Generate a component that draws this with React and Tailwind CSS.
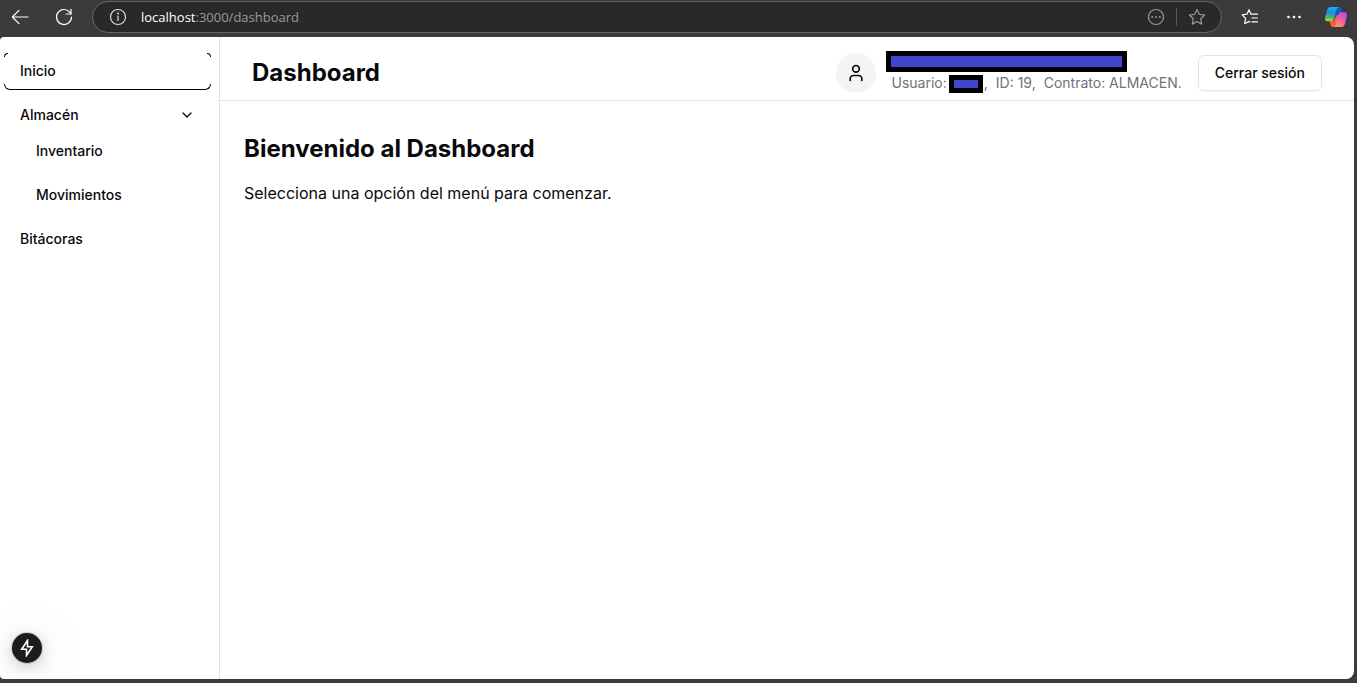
import React from "react";
import { ChevronDown, User } from "lucide-react";

const iconProps = {
  fill: "none",
  stroke: "currentColor",
  strokeLinecap: "round",
  strokeLinejoin: "round",
  "aria-hidden": true,
};

function BackIcon() {
  return (
    <svg width="18" height="16" viewBox="0 0 18 16" strokeWidth="1.2" {...iconProps}>
      <path d="M17 8H1.5M8 1.3 1.3 8 8 14.7" />
    </svg>
  );
}

function ReloadIcon() {
  return (
    <svg width="18" height="18" viewBox="0 0 18 18" strokeWidth="1.2" {...iconProps}>
      <path d="M16.5 9.2A7.5 7.5 0 1 1 14.6 4L16 5.8" />
      <path d="M16 1.3V6h-4.8" />
    </svg>
  );
}

function InfoIcon() {
  return (
    <svg width="18" height="18" viewBox="0 0 18 18" strokeWidth="1.2" {...iconProps}>
      <circle cx="9" cy="9" r="7.5" />
      <path d="M9 8v4.5" />
      <circle cx="9" cy="5.6" r="0.4" fill="currentColor" />
    </svg>
  );
}

function MoreCircleIcon() {
  return (
    <svg width="18" height="18" viewBox="0 0 18 18" strokeWidth="1.2" {...iconProps}>
      <circle cx="9" cy="9" r="7.5" />
      <g fill="currentColor" stroke="none">
        <circle cx="5.2" cy="9" r="1" />
        <circle cx="9" cy="9" r="1" />
        <circle cx="12.8" cy="9" r="1" />
      </g>
    </svg>
  );
}

function StarIcon() {
  return (
    <svg width="18" height="18" viewBox="0 0 18 18" strokeWidth="1.2" {...iconProps}>
      <path d="m9 1.4 2.3 4.900 5.300.7-3.900 3.700 1 5.400L9 13.500l-4.700 2.600 1-5.400L1.400 7l5.300-.7z" />
    </svg>
  );
}

function FavoritesIcon() {
  return (
    <svg width="18" height="18" viewBox="0 0 18 18" strokeWidth="1.2" {...iconProps}>
      <path d="M10.600 6.200H10L8 1.800 5.900 6.200l-4.700.7L4.600 10.300l-.9 5.400L8 13.400l1 .6M11 6.200h5.500M11 10h5.500M11 13.800h5.500" />
    </svg>
  );
}

function DotsIcon() {
  return (
    <svg width="16" height="4" viewBox="0 0 16 4" fill="currentColor" aria-hidden="true">
      <circle cx="2.5" cy="2" r="1.3" />
      <circle cx="8" cy="2" r="1.3" />
      <circle cx="13.5" cy="2" r="1.3" />
    </svg>
  );
}

function CopilotIcon() {
  return (
    <svg width="24" height="22" viewBox="0 0 24 22" aria-hidden="true">
      <defs>
        <linearGradient id="cool" x1="0.4" y1="0" x2="0.3" y2="1">
          <stop offset="0" stopColor="#14b4f0" />
          <stop offset="0.4" stopColor="#1b8fe0" />
          <stop offset="0.75" stopColor="#4fb965" />
          <stop offset="1" stopColor="#e0d51d" />
        </linearGradient>
        <linearGradient id="warm" x1="0.9" y1="0" x2="0.3" y2="1">
          <stop offset="0" stopColor="#a84df0" />
          <stop offset="0.5" stopColor="#ef5c9c" />
          <stop offset="1" stopColor="#ff9a4f" />
        </linearGradient>
        <linearGradient id="deep" x1="0" y1="0" x2="1" y2="1">
          <stop offset="0" stopColor="#1268de" />
          <stop offset="1" stopColor="#1745b8" />
        </linearGradient>
      </defs>
      <path d="M13 1h2.300q1.700 0 2.300 2l.9 3.300h-2.600q-2 0-2.700 2.500L11 13H9z" fill="url(#deep)" />
      <path d="M11 21H8.800q-1.700 0-2.300-2l-1-3.700h2.400q2 0 2.700-2.500L13 9h2z" fill="#f2603a" />
      <path d="M6.500 1H15q-1.900.2-2.600 2.500L9.800 13q-.6 2.300-2.500 2.300H3.500Q.3 15.300 1.200 11l1.900-7Q4 1 6.500 1z" fill="url(#cool)" />
      <path d="M17.500 21H9q1.900-.2 2.600-2.500L14.200 9q.6-2.700 2.500-2.700h3.800q3.200 0 2.300 4.300l-1.900 7.400q-.9 3-3.400 3z" fill="url(#warm)" />
    </svg>
  );
}

function BoltIcon() {
  return (
    <svg width="14" height="18" viewBox="0 0 14 18" strokeWidth="1.6" {...iconProps} strokeLinejoin="miter">
      <path d="M7.5 1.5 1.7 10.3H6.5V16.5L12.3 7.7H7.5z" />
    </svg>
  );
}

function BrowserBar() {
  return (
    <div className="flex h-[37px] shrink-0 items-start pr-1.5 pt-px text-white">
      <button aria-label="Atrás" className="flex h-8 w-10 items-center justify-center">
        <BackIcon />
      </button>
      <button aria-label="Actualizar" className="ml-1 flex h-8 w-10 items-center justify-center">
        <ReloadIcon />
      </button>
      <div className="ml-2 flex h-8 min-w-0 flex-1 items-center rounded-full border border-[#666] bg-[#292929] pl-4 pr-[15px]">
        <button aria-label="Información del sitio" className="text-[#ddd]">
          <InfoIcon />
        </button>
        <button
          aria-label="Barra de direcciones"
          className="ml-3.5 flex-1 truncate text-left font-['Open_Sans',sans-serif] text-[13px] leading-5 text-[#999]"
        >
          <span className="font-medium text-white">localhost</span>:3000/dashboard
        </button>
        <div className="flex items-center text-[#999]">
          <button aria-label="Más acciones">
            <MoreCircleIcon />
          </button>
          <span className="ml-[11px] h-[18px] w-px bg-[#555]" />
          <button aria-label="Agregar a favoritos" className="ml-[11px]">
            <StarIcon />
          </button>
        </div>
      </div>
      <button aria-label="Favoritos" className="ml-2 flex h-8 w-10 items-center justify-center">
        <FavoritesIcon />
      </button>
      <button aria-label="Configuración" className="ml-1 flex h-8 w-10 items-center justify-center">
        <DotsIcon />
      </button>
      <button aria-label="Copilot" className="ml-2.5 flex h-8 items-center">
        <CopilotIcon />
      </button>
    </div>
  );
}

const navItem = "flex h-9 items-center rounded-md px-4";

function Sidebar() {
  return (
    <aside className="w-[220px] shrink-0 border-r border-[#e4e4e7] pl-1 pr-2 pt-4">
      <nav className="flex flex-col gap-2 text-sm font-medium">
        <a href="#inicio" className={`${navItem} relative`}>
          Inicio
          <span className="absolute left-0 top-0 size-1 rounded-tl-md border-l border-t border-black" />
          <span className="absolute right-0 top-0 size-1 rounded-tr-md border-r border-t border-black" />
          <span className="absolute inset-x-0 -bottom-px h-1.5 rounded-b-md border-x border-b border-black" />
        </a>
        <div>
          <button className={`${navItem} w-full justify-between`}>
            Almacén
            <ChevronDown size={16} strokeWidth={2} />
          </button>
          <div className="flex flex-col gap-2 pl-4">
            <a href="#inventario" className={navItem}>Inventario</a>
            <a href="#movimientos" className={navItem}>Movimientos</a>
          </div>
        </div>
        <a href="#bitacoras" className={navItem}>Bitácoras</a>
      </nav>
    </aside>
  );
}

function Header() {
  return (
    <header className="h-16 border-b border-[#e4e4e7] px-8 pt-4">
      <div className="flex h-10 items-center justify-between">
        <h1 className="text-2xl font-bold">Dashboard</h1>
        <div className="flex h-10 items-center gap-4">
          <div className="flex size-10 items-center justify-center rounded-full bg-[#f4f4f5]">
            <User size={20} strokeWidth={2} />
          </div>
          <div className="flex flex-col gap-px self-end text-sm text-[#71717a]">
            <span className="-ml-1.5 h-[21px] w-[241px] border-[5px] border-black bg-[#3f48cc]" />
            <p className="flex items-center gap-2">
              <span className="flex items-center">
                Usuario:
                <span className="ml-0.5 mr-px h-[18px] w-[34px] self-end border-[5px] border-black bg-[#3f48cc]" />,
              </span>
              <span>ID: 19,</span>
              <span>Contrato: ALMACEN.</span>
            </p>
          </div>
          <button className="h-9 rounded-md border border-[#e4e4e7] px-4 text-sm font-medium shadow-xs">
            Cerrar sesión
          </button>
        </div>
      </div>
    </header>
  );
}

export default function App() {
  return (
    <div className="flex h-screen flex-col overflow-hidden bg-[#3b3b3b] pb-1 pr-[3px] font-['Inter',sans-serif] text-[#09090b]">
      <BrowserBar />
      <div className="relative flex min-h-0 flex-1 overflow-hidden rounded-l-sm rounded-r-lg bg-white">
        <Sidebar />
        <div className="min-w-0 flex-1">
          <Header />
          <main className="px-6 pt-8">
            <h2 className="mb-4 text-2xl font-bold">Bienvenido al Dashboard</h2>
            <p>Selecciona una opción del menú para comenzar.</p>
          </main>
        </div>
        <button
          aria-label="Herramientas de desarrollo"
          className="absolute bottom-4 left-3 flex size-[30px] items-center justify-center rounded-full bg-[#1c1c1e] text-white shadow-[0_0_0_1px_#0002,0_4px_16px_#0003,0_8px_60px_#0002]"
        >
          <BoltIcon />
        </button>
      </div>
    </div>
  );
}
